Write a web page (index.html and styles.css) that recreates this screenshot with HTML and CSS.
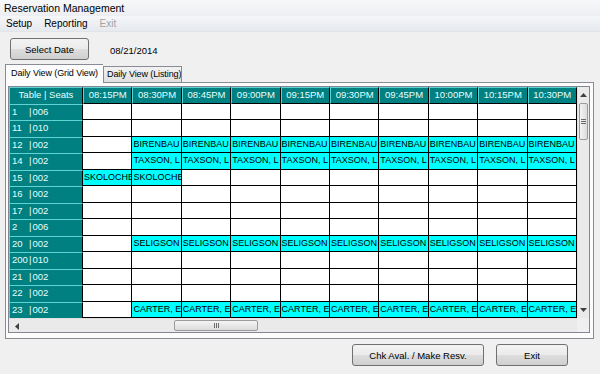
FILE: index.html
```html
<!DOCTYPE html>
<html lang="en">
<head>
    <meta charset="UTF-8">
    <meta name="viewport" content="width=device-width, initial-scale=1.0">
    <title>Reservation Management</title>
    <link rel="stylesheet" href="styles.css">
</head>
<body>
    <div class="window">
        <div class="titlebar">Reservation Management</div>
        <div class="menubar">
            <span class="menu-item">Setup</span>
            <span class="menu-item">Reporting</span>
            <span class="menu-item disabled">Exit</span>
        </div>
        <div class="form">
            <div class="toolbar">
                <button class="btn select-date">Select Date</button>
                <span class="date">08/21/2014</span>
            </div>
            <div class="tabs">
                <div class="tab active">Daily View (Grid View)</div>
                <div class="tab">Daily View (Listing)</div>
            </div>
            <div class="panel">
                <div class="flexgrid">
                    <div class="grid-main">
                        <div class="cells" id="cells"></div>
                        <div class="vscroll">
                            <div class="sb-btn">
                                <svg width="7" height="4" viewBox="0 0 7 4"><path d="M0 4 L3.5 0 L7 4 Z" fill="#404040"/></svg>
                            </div>
                            <div class="vthumb">
                                <span></span><span></span><span></span>
                            </div>
                            <div class="sb-fill"></div>
                            <div class="sb-btn">
                                <svg width="7" height="4" viewBox="0 0 7 4"><path d="M0 0 L3.5 4 L7 0 Z" fill="#404040"/></svg>
                            </div>
                        </div>
                    </div>
                    <div class="grid-bottom">
                        <div class="hscroll">
                            <div class="sb-btn h">
                                <svg width="4" height="7" viewBox="0 0 4 7"><path d="M4 0 L0 3.5 L4 7 Z" fill="#404040"/></svg>
                            </div>
                            <div class="hthumb">
                                <span></span><span></span><span></span>
                            </div>
                        </div>
                        <div class="corner"></div>
                    </div>
                </div>
            </div>
            <div class="actions">
                <button class="btn chk">Chk Aval. / Make Resv.</button>
                <button class="btn exit">Exit</button>
            </div>
        </div>
    </div>
    <script>
        let times = ['08:15PM', '08:30PM', '08:45PM', '09:00PM', '09:15PM', '09:30PM', '09:45PM', '10:00PM', '10:15PM', '10:30PM'];
        // table, seats, guest name, first column, last column
        let rows = [
            ['1', '006'],
            ['11', '010'],
            ['12', '002', 'BIRENBAU', 1, 9],
            ['14', '002', 'TAXSON, L', 1, 9],
            ['15', '002', 'SKOLOCHE', 0, 1],
            ['16', '002'],
            ['17', '002'],
            ['2', '006'],
            ['20', '002', 'SELIGSON', 1, 9],
            ['200', '010'],
            ['21', '002'],
            ['22', '002'],
            ['23', '002', 'CARTER, E', 1, 9]
        ];
        let cells = document.getElementById('cells');
        let html = '<div class="cell fixed corner-head">Table | Seats</div>';
        times.forEach(function (t) {
            html += '<div class="cell fixed head">' + t + '</div>';
        });
        rows.forEach(function (r) {
            html += '<div class="cell fixed rowhead"><span class="num">' + r[0] + '</span><span class="pipe">|</span>' + r[1] + '</div>';
            for (let i = 0; i < times.length; i++) {
                if (r[2] && i >= r[3] && i <= r[4]) {
                    html += '<div class="cell booked">' + r[2] + '</div>';
                } else {
                    html += '<div class="cell"></div>';
                }
            }
        });
        cells.innerHTML = html;
    </script>
</body>
</html>
```

FILE: styles.css
```css
body {
    margin: 0;
    background: #f0f0f0;
    font-family: "Liberation Sans", Arial, sans-serif;
    font-size: 10px;
    color: #000;
}
.window {
    width: 600px;
    height: 374px;
    overflow: hidden;
    background: #f0f0f0;
}
.titlebar {
    height: 16px;
    line-height: 16px;
    padding-left: 4px;
    background: linear-gradient(#f7f8fa, #eceef2);
    font-size: 10.5px;
}
.menubar {
    height: 16px;
    line-height: 16px;
    display: flex;
    gap: 12px;
    padding-left: 6px;
    background: linear-gradient(#f4f6f9, #e6e9ee);
    border-bottom: 1px solid #e2e4e8;
    box-sizing: border-box;
}
.menu-item.disabled {
    color: #a3a3a3;
}
.form {
    padding-top: 6px;
}
.toolbar {
    display: flex;
    align-items: center;
    padding-left: 10px;
    height: 22px;
}
.btn {
    font-family: "Liberation Sans", Arial, sans-serif;
    font-size: 9.5px;
    color: #000;
    border: 1px solid #707070;
    border-radius: 3px;
    background: linear-gradient(#f3f3f3 0%, #ebebeb 48%, #dddddd 52%, #cfcfcf 100%);
    padding: 0;
    height: 22px;
    cursor: pointer;
}
.select-date {
    width: 79px;
}
.date {
    margin-left: 21px;
    font-size: 9.5px;
    padding-top: 2px;
}
.tabs {
    display: flex;
    align-items: flex-end;
    height: 18px;
    margin-top: 4px;
    padding-left: 5px;
}
.tab {
    height: 16px;
    line-height: 15px;
    padding: 0 0 0 3px;
    border: 1px solid #898c95;
    border-bottom: none;
    box-sizing: border-box;
    background: linear-gradient(#f2f2f2, #e0e0e0);
    font-size: 9px;
    letter-spacing: -0.1px;
    white-space: nowrap;
    overflow: hidden;
}
.tab.active {
    width: 98px;
    height: 19px;
    line-height: 17px;
    padding-left: 5px;
    margin-bottom: -1px;
    background: #fcfcfc;
    position: relative;
    z-index: 1;
    border-right: none;
}
.tab:not(.active) {
    width: 79px;
}
.panel {
    margin-left: 5px;
    width: 589px;
    height: 257px;
    box-sizing: border-box;
    border: 1px solid #898c95;
    background: #fcfcfc;
    padding: 3px 0 0 2px;
}
.flexgrid {
    width: 582px;
    border: 1px solid #828790;
    box-sizing: border-box;
    background: #f0f0f0;
}
.grid-main {
    display: flex;
    height: 231px;
}
.cells {
    display: grid;
    grid-template-columns: 74px repeat(10, 49.4px);
    grid-auto-rows: 16.5px;
    width: 568px;
    background: #fff;
}
.cell {
    box-sizing: border-box;
    border-right: 1px solid #000;
    border-bottom: 1px solid #000;
    background: #fff;
    white-space: nowrap;
    overflow: hidden;
    padding-left: 2px;
    line-height: 15px;
    font-size: 9px;
}
.cell.booked {
    background: #00ffff;
    padding-left: 1px;
}
.cell.fixed {
    background: #008080;
    color: #e6ffff;
    border-top: 1px solid #5fd3d3;
    border-left: 1px solid #5fd3d3;
    border-bottom: none;
    line-height: 14px;
    font-size: 9.5px;
}
.cell.head {
    text-align: center;
    padding-left: 0;
    border-bottom: 1px solid #000;
    line-height: 13px;
}
.cell.corner-head {
    text-align: center;
    padding-left: 0;
}
.num {
    display: inline-block;
    width: 17px;
}
.pipe {
    margin-right: 1px;
}
.vscroll {
    width: 12px;
    display: flex;
    flex-direction: column;
    background: #eaeaea;
    border-left: 1px solid #e0e0e0;
}
.sb-btn {
    height: 16px;
    display: flex;
    align-items: center;
    justify-content: center;
}
.sb-btn.h {
    width: 16px;
    height: 14px;
}
.vthumb {
    height: 37px;
    margin: 0 1px;
    border: 1px solid #9b9b9b;
    border-radius: 2px;
    box-sizing: border-box;
    background: linear-gradient(90deg, #f4f4f4, #dcdcdc);
    display: flex;
    flex-direction: column;
    align-items: center;
    justify-content: center;
    gap: 1px;
}
.vthumb span {
    width: 5px;
    height: 1px;
    background: #6a6a6a;
}
.sb-fill {
    flex: 1;
}
.grid-bottom {
    display: flex;
    height: 14px;
}
.hscroll {
    width: 568px;
    display: flex;
    align-items: stretch;
    background: #eaeaea;
    border-top: 1px solid #e0e0e0;
    box-sizing: border-box;
}
.hthumb {
    width: 84px;
    margin: 1px 0 1px 149px;
    border: 1px solid #9b9b9b;
    border-radius: 2px;
    box-sizing: border-box;
    background: linear-gradient(#f4f4f4, #dcdcdc);
    display: flex;
    align-items: center;
    justify-content: center;
    gap: 1px;
}
.hthumb span {
    width: 1px;
    height: 5px;
    background: #6a6a6a;
}
.corner {
    flex: 1;
    background: #f0f0f0;
}
.actions {
    display: flex;
    justify-content: flex-end;
    gap: 12px;
    padding-right: 32px;
    margin-top: 5px;
}
.chk {
    width: 132px;
}
.exit {
    width: 72px;
}
```
